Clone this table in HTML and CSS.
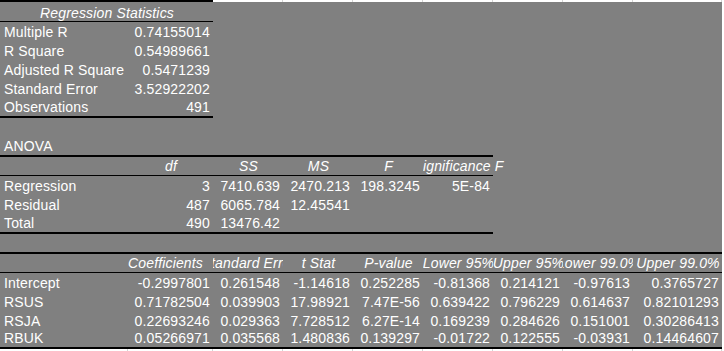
FILE: index.html
```html
<!DOCTYPE html>
<html lang="en">
<head>
<meta charset="utf-8">
<title>Regression output</title>
<link rel="stylesheet" href="styles.css">
</head>
<body>
<div class="sheet">
  <div class="cols edge">
    <div class="ink"></div>
    <div></div><div></div><div></div><div></div><div></div><div></div><div></div>
    <div class="strip"></div>
  </div>
  <div class="main">
    <div class="grid">
      <div class="row h20">
        <div class="c i span2 bb1 pb0">Regression Statistics</div>
      </div>
      <div class="row h19"><div class="l">Multiple R</div><div class="r">0.74155014</div></div>
      <div class="row h19"><div class="l">R Square</div><div class="r">0.54989661</div></div>
      <div class="row h19"><div class="l">Adjusted R Square</div><div class="r">0.5471239</div></div>
      <div class="row h19"><div class="l">Standard Error</div><div class="r">3.52922202</div></div>
      <div class="row h20"><div class="l bb2">Observations</div><div class="r bb2">491</div></div>
      <div class="row h19"></div>
      <div class="row h20">
        <div class="l bb2">ANOVA</div><div class="bb2"></div><div class="bb2"></div><div class="bb2"></div><div class="bb2"></div><div class="bb2"></div>
      </div>
      <div class="row h19">
        <div class="bb1"></div>
        <div class="c i bb1">df</div>
        <div class="c i bb1">SS</div>
        <div class="c i bb1">MS</div>
        <div class="c i bb1">F</div>
        <div class="c i bb1 clip-left"><span>Significance F</span></div>
      </div>
      <div class="row h19">
        <div class="l">Regression</div><div class="r">3</div><div class="r">7410.639</div><div class="r">2470.213</div><div class="r">198.3245</div><div class="r">5E-84</div>
      </div>
      <div class="row h19">
        <div class="l">Residual</div><div class="r">487</div><div class="r">6065.784</div><div class="r">12.45541</div>
      </div>
      <div class="row h20">
        <div class="l bb2">Total</div><div class="r bb2">490</div><div class="r bb2">13476.42</div><div class="bb2"></div><div class="bb2"></div><div class="bb2"></div>
      </div>
      <div class="row h18"></div>
      <div class="row h21 framed">
        <div></div>
        <div class="c i clip-right coef"><span>Coefficients</span></div>
        <div class="c i clip"><span>Standard Error</span></div>
        <div class="c i">t Stat</div>
        <div class="c i">P-value</div>
        <div class="c i clip"><span>Lower 95%</span></div>
        <div class="c i clip"><span>Upper 95%</span></div>
        <div class="c i clip"><span>Lower 99.0%</span></div>
        <div class="c i">Upper 99.0%</div>
      </div>
      <div class="row h19">
        <div class="l">Intercept</div><div class="r">-0.2997801</div><div class="r">0.261548</div><div class="r">-1.14618</div><div class="r">0.252285</div><div class="r">-0.81368</div><div class="r">0.214121</div><div class="r">-0.97613</div><div class="r">0.3765727</div>
      </div>
      <div class="row h19">
        <div class="l">RSUS</div><div class="r">0.71782504</div><div class="r">0.039903</div><div class="r">17.98921</div><div class="r">7.47E-56</div><div class="r">0.639422</div><div class="r">0.796229</div><div class="r">0.614637</div><div class="r">0.82101293</div>
      </div>
      <div class="row h19">
        <div class="l">RSJA</div><div class="r">0.22693246</div><div class="r">0.029363</div><div class="r">7.728512</div><div class="r">6.27E-14</div><div class="r">0.169239</div><div class="r">0.284626</div><div class="r">0.151001</div><div class="r">0.30286413</div>
      </div>
      <div class="row h19 closed">
        <div class="l">RBUK</div><div class="r">0.05266971</div><div class="r">0.035568</div><div class="r">1.480836</div><div class="r">0.139297</div><div class="r">-0.01722</div><div class="r">0.122555</div><div class="r">-0.03931</div><div class="r">0.14464607</div>
      </div>
    </div>
    <div class="side"></div>
  </div>
  <div class="cols edge">
    <div></div><div></div><div></div><div></div><div></div><div></div><div></div><div></div><div></div>
    <div class="strip"></div>
  </div>
</div>
</body>
</html>
```

FILE: styles.css
```css
* {
  box-sizing: border-box;
  margin: 0;
  padding: 0;
}

html,
body {
  background: #ffffff;
}

body {
  width: 724px;
  height: 351px;
  overflow: hidden;
  font-family: "Liberation Sans", Arial, sans-serif;
  font-size: 14px;
  color: #ffffff;
  letter-spacing: 0.15px;
}

.sheet {
  display: flex;
  flex-direction: column;
  width: 724px;
}

.cols {
  display: grid;
  grid-template-columns: 128px 85px repeat(6, 70px) 89px 2px;
}

.edge {
  height: 2px;
}

.edge > div {
  background: #ffffff;
  border-right: 1px solid #d4d4d4;
}

.edge > .ink {
  grid-column: span 2;
  background: #000000;
  border: 0;
}

.edge > .strip {
  border: 0;
}

.main {
  display: flex;
}

.grid {
  width: 722px;
  background: #808080;
}

.side {
  width: 2px;
  background: repeating-linear-gradient(to bottom, #ffffff 0 19px, #d4d4d4 19px 20px);
  background-size: 2px 19px;
  background-position: 0 1px;
}

.row {
  display: grid;
  grid-template-columns: 128px 85px repeat(6, 70px) 89px;
}

.row > div {
  display: flex;
  align-items: flex-end;
  padding: 0 3px 1px 4px;
  line-height: 16px;
  white-space: nowrap;
}

.h18 { height: 18px; }
.h19 { height: 19px; }
.h20 { height: 20px; }
.h21 { height: 21px; }

.l { justify-content: flex-start; }
.r { justify-content: flex-end; }
.c { justify-content: center; }
.i { font-style: italic; }

.span2 { grid-column: span 2; }

.row > .pb0 { padding-bottom: 0; }

.row > .coef { padding-right: 14px; }

.bb1 { border-bottom: 1px solid #000000; }
.bb2 { border-bottom: 2px solid #000000; }

.framed {
  border-top: 2px solid #000000;
  border-bottom: 1px solid #000000;
}

.closed {
  border-bottom: 2px solid #000000;
}

.clip { overflow: hidden; }
.clip-left { clip-path: inset(0 -80px 0 0); }
.clip-right { clip-path: inset(0 0 0 -80px); }
```
